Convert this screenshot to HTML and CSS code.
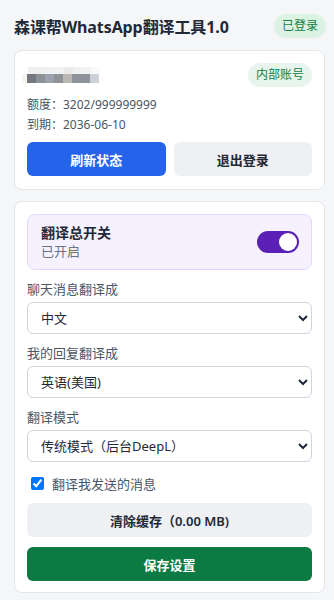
FILE: index.html
```html
<!DOCTYPE html>
<html lang="zh-CN">
<head>
<meta charset="utf-8">
<link rel="stylesheet" href="styles.css">
</head>
<body>
<div class="app">
  <header class="header">
    <h1 class="title">森课帮WhatsApp翻译工具1.0</h1>
    <span class="pill pill-login">已登录</span>
  </header>

  <section class="card account">
    <div class="account-top">
      <div class="mosaic" aria-hidden="true">
        <div class="mrow top"><i style="background:#f3efec"></i><i style="background:#eeeff1"></i><i style="background:#f0f1f3"></i><i style="background:#f1f2f4"></i><i style="background:#eceae8"></i><i style="background:#f0f1f3"></i><i style="background:#f2f3f5"></i><i style="background:#fafafb"></i></div>
        <div class="mrow bottom"><i style="background:#f7f5f2"></i><i style="background:#767880"></i><i style="background:#8d9198"></i><i style="background:#9ca2ad"></i><i style="background:#8f9297"></i><i style="background:#bbb8b3"></i><i style="background:#8f949c"></i><i style="background:#8e939b"></i><i style="background:#cdd2da"></i></div>
      </div>
      <span class="pill pill-internal">内部账号</span>
    </div>
    <div class="info">额度：3202/999999999</div>
    <div class="info">到期：2036-06-10</div>
    <div class="btn-row">
      <button class="btn btn-blue">刷新状态</button>
      <button class="btn btn-grey">退出登录</button>
    </div>
  </section>

  <section class="card settings">
    <div class="master">
      <div class="master-text">
        <div class="master-title">翻译总开关</div>
        <div class="master-sub">已开启</div>
      </div>
      <span class="switch"><span class="knob"></span></span>
    </div>

    <label class="field-label">聊天消息翻译成</label>
    <select class="select"><option>中文</option></select>

    <label class="field-label">我的回复翻译成</label>
    <select class="select"><option>英语(美国)</option></select>

    <label class="field-label">翻译模式</label>
    <select class="select"><option>传统模式（后台DeepL）</option></select>

    <label class="check-row"><input type="checkbox" checked><span>翻译我发送的消息</span></label>

    <button class="btn btn-grey btn-full">清除缓存（0.00 MB)</button>
    <button class="btn btn-green btn-full">保存设置</button>
  </section>
</div>
</body>
</html>
```

FILE: styles.css
```css
* { box-sizing: border-box; }
html, body { margin: 0; padding: 0; }
body {
  background: #f5f6f8;
  font-family: "Segoe UI", "Noto Sans", "Noto Sans CJK SC", sans-serif;
  color: #1f2937;
}
.app {
  padding: 14px 8px 0 14px;
  display: flex;
  flex-direction: column;
}
.header {
  display: flex;
  align-items: center;
  justify-content: space-between;
  height: 24px;
  margin-bottom: 12px;
}
.title {
  margin: 0;
  font-size: 16px;
  font-weight: 700;
  color: #1f2937;
  letter-spacing: -0.1px;
}
.pill {
  display: inline-flex;
  align-items: center;
  border-radius: 999px;
  font-size: 12px;
  line-height: 1;
}
.pill-login {
  height: 24px;
  padding: 0 8px;
  background: #dcf3e4;
  color: #15803d;
}
.card {
  background: #ffffff;
  border: 1px solid #e3e6eb;
  border-radius: 8px;
  padding: 12px 12px;
  width: 311px;
}
.account { height: 140px; padding-top: 12px; }
.account-top {
  display: flex;
  justify-content: space-between;
  align-items: center;
  height: 24px;
  margin-bottom: 8px;
}
.mosaic { display: flex; flex-direction: column; }
.mrow { display: flex; }
.mrow i { display: block; width: 9px; }
.mrow.top { height: 7px; margin-left: 1px; }
.mrow.bottom { height: 9px; margin-left: -5px; }
.mrow.bottom i:first-child { width: 5px; }
.pill-internal {
  height: 24px;
  padding: 0 8px;
  background: #e8f5ee;
  color: #15803d;
}
.info {
  font-size: 12px;
  color: #4b5563;
  line-height: 20px;
}
.btn-row {
  display: flex;
  gap: 8px;
  margin-top: 7px;
}
.btn {
  font-family: inherit;
  border: none;
  border-radius: 6px;
  height: 34px;
  font-size: 13px;
  font-weight: 700;
  cursor: pointer;
  flex: 1;
}
.btn-blue { background: #2563eb; color: #ffffff; }
.btn-grey { background: #eef0f4; color: #1f2937; }
.btn-green { background: #0b7a43; color: #ffffff; }
.settings {
  margin-top: 11px;
  display: flex;
  flex-direction: column;
  padding-bottom: 11px;
}
.master {
  display: flex;
  align-items: center;
  justify-content: space-between;
  background: #f6f1ff;
  border: 1px solid #e3d7fd;
  border-radius: 8px;
  height: 56px;
  padding: 0 12px 0 13px;
}
.master-title { font-size: 14px; font-weight: 700; color: #1f2937; line-height: 18px; }
.master-sub { font-size: 13px; color: #6b7280; line-height: 18px; }
.switch {
  width: 42px;
  height: 22px;
  border-radius: 11px;
  background: #5b21b6;
  display: flex;
  align-items: center;
  justify-content: flex-end;
  padding: 0 2px;
}
.knob {
  width: 18px;
  height: 18px;
  border-radius: 50%;
  background: #ffffff;
}
.field-label {
  font-size: 13px;
  color: #4b5563;
  margin-top: 10px;
  margin-bottom: 4px;
  line-height: 18px;
}
.select {
  font-family: inherit;
  font-size: 13px;
  color: #1f2937;
  height: 32px;
  border: 1px solid #cdd5df;
  border-radius: 6px;
  background: #ffffff;
  padding: 0 9px;
  width: 100%;
}
.check-row {
  display: flex;
  align-items: center;
  gap: 8px;
  margin-top: 11px;
  font-size: 13px;
  color: #4b5563;
  height: 20px;
}
.check-row input { margin: 0 0 0 4px; width: 13px; height: 13px; }
.btn-full { flex: none; width: 100%; }
.settings .btn-grey { margin-top: 10px; font-weight: 600; }
.settings .btn-green { margin-top: 10px; }
```
